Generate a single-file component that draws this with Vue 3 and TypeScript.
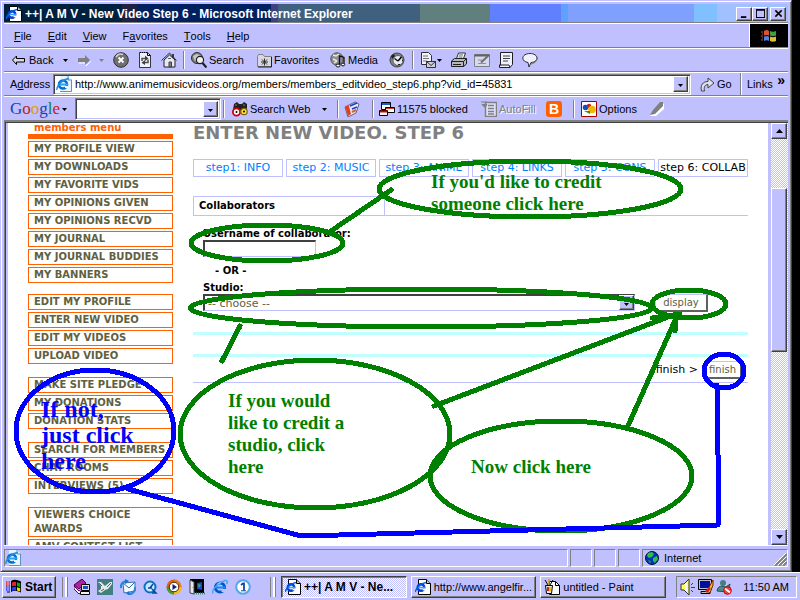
<script setup lang="ts">
import { ref } from 'vue'

interface Tool { id: string; icon: string; label?: string; caret?: boolean }

const url = ref('http://www.animemusicvideos.org/members/members_editvideo_step6.php?vid_id=45831')
const query = ref('')
const username = ref('')
const studio = ref('')

const menus: [string, string, string][] = [
  ['', 'F', 'ile'], ['', 'E', 'dit'], ['', 'V', 'iew'], ['F', 'a', 'vorites'], ['', 'T', 'ools'], ['', 'H', 'elp'],
]

const tools: Tool[] = [
  { id: 'back', icon: 'back', label: 'Back' },
  { id: 'back-list', icon: 'caret' },
  { id: 'forward', icon: 'forward' },
  { id: 'forward-list', icon: 'caret-off' },
  { id: 'stop', icon: 'stop' },
  { id: 'refresh', icon: 'refresh' },
  { id: 'home', icon: 'home' },
  { id: 'sep', icon: '' },
  { id: 'search', icon: 'search', label: 'Search' },
  { id: 'favorites', icon: 'favorites', label: 'Favorites' },
  { id: 'media', icon: 'media', label: 'Media' },
  { id: 'history', icon: 'history' },
  { id: 'sep', icon: '' },
  { id: 'mail', icon: 'mail' },
  { id: 'mail-list', icon: 'caret' },
  { id: 'print', icon: 'print' },
  { id: 'edit', icon: 'edit' },
  { id: 'discuss', icon: 'note' },
  { id: 'messenger', icon: 'balloon' },
]

const sideGroups: string[][] = [
  ['MY PROFILE VIEW', 'MY DOWNLOADS', 'MY FAVORITE VIDS', 'MY OPINIONS GIVEN', 'MY OPINIONS RECVD', 'MY JOURNAL', 'MY JOURNAL BUDDIES', 'MY BANNERS'],
  ['EDIT MY PROFILE', 'ENTER NEW VIDEO', 'EDIT MY VIDEOS', 'UPLOAD VIDEO'],
  ['MAKE SITE PLEDGE', 'MY DONATIONS', 'DONATION STATS'],
  ['SEARCH FOR MEMBERS', 'CHAT ROOMS', 'INTERVIEWS (5)'],
  ['VIEWERS CHOICE AWARDS', 'AMV CONTEST LIST'],
]

const steps = ['step1: INFO', 'step 2: MUSIC', 'step 3: ANIME', 'step 4: LINKS', 'step 5: CONS', 'step 6: COLLAB']

const launchers = ['books', 'bird', 'outlook', 'quicktime', 'player', 'door', 'ie', 'one']

const tasks = [
  { icon: 'iepage', label: '++| A M V - Ne...', active: true },
  { icon: 'iepage', label: 'http://www.angelfir...', active: false },
  { icon: 'paint', label: 'untitled - Paint', active: false },
]
</script>

<template>
  <div class="screen">
    <svg class="sprites" aria-hidden="true">
      <symbol id="i-ie" viewBox="0 0 16 16">
        <circle cx="8" cy="8.500" r="4.600" fill="none" stroke="#0058c8" stroke-width="3" />
        <path d="M4 8.500H13.500" stroke="#2088f0" stroke-width="2.200" />
        <path d="M9.500 10h6v3h-6z" fill="#c0c0ff" />
        <path d="M1 14.500C-1 11 7 3 13 1.500c3-.5 2.500 2 1.500 3.500" fill="none" stroke="#40a8f8" stroke-width="1.500" />
        <path d="M5 5.500a4.500 4.500 0 0 1 4-1.700" fill="none" stroke="#90d8ff" stroke-width="1.200" />
      </symbol>
      <symbol id="i-iepage" viewBox="0 0 16 16">
        <path d="M3.500 .5h8l4 4v11h-12z" fill="#fff" stroke="#000" />
        <path d="M11.500 .5v4h4" fill="#c0c0c0" stroke="#000" />
        <circle cx="6" cy="8.500" r="3.300" fill="none" stroke="#0040d0" stroke-width="2.400" />
        <path d="M3 8.500h7" stroke="#40a0ff" stroke-width="1.500" />
        <path d="M.5 13C0 10 6 4 11 3.500" fill="none" stroke="#0060e0" stroke-width="1.300" />
        <path d="M7.500 9.500h4v1.800h-4z" fill="#fff" />
      </symbol>
      <symbol id="i-iedoc" viewBox="0 0 16 16">
        <path d="M4 0h8l4 4v12H4z" fill="#e8f4ff" />
        <path d="M12 0v4h4M15.500 4v11.500H4" fill="none" stroke="#6090c0" />
        <circle cx="7" cy="8.500" r="4" fill="none" stroke="#0070d0" stroke-width="2.600" />
        <path d="M3 8.500h9" stroke="#30a0f0" stroke-width="2" />
        <path d="M9 10h5v2H9z" fill="#e8f4ff" />
        <path d="M1 14C0 10 7 3 13 2.500" fill="none" stroke="#2090e0" stroke-width="1.400" />
      </symbol>
      <symbol id="i-caret" viewBox="0 0 5 16"><path d="M0 7h5L2.500 10z" fill="#000" /></symbol>
      <symbol id="i-caret-off" viewBox="0 0 5 16"><path d="M0 7h5L2.500 10z" fill="#808080" /></symbol>
      <symbol id="i-back" viewBox="0 0 16 16">
        <path d="M1.500 8l4-4v2.500h8v3.500h-8v2.500z" fill="#d8d8e8" stroke="#000" stroke-linejoin="round" />
      </symbol>
      <symbol id="i-forward" viewBox="0 0 16 16">
        <path d="M14 9l-5 5v-3H2" fill="none" stroke="#fff" />
        <path d="M1 6h7V3l5 5-5 5v-3H1z" fill="#808080" />
      </symbol>
      <symbol id="i-stop" viewBox="0 0 16 16">
        <circle cx="8" cy="8" r="7.300" fill="#707070" stroke="#303030" />
        <path d="M3 5a6 6 0 0 1 7-2.500" fill="none" stroke="#d0d0d0" stroke-width="1.500" />
        <path d="M5.500 5.500l5 5m0-5l-5 5" stroke="#fff" stroke-width="1.800" />
      </symbol>
      <symbol id="i-refresh" viewBox="0 0 16 16">
        <path d="M2.500 .5h8l3 3v12h-11z" fill="#f0f0ff" stroke="#000" stroke-dasharray="1.500 .5" />
        <path d="M10.500 .5v3h3" fill="none" stroke="#000" />
        <path d="M5 9V6.500h4M11 7.500V10.500H7" fill="none" stroke="#505050" stroke-width="1.500" />
        <path d="M8 3.500l3.500 3L8 9zM8 8l-3.500 2.700L8 13z" fill="#404040" />
      </symbol>
      <symbol id="i-home" viewBox="0 0 16 16">
        <path d="M11 2h2v4h-2z" fill="#404040" />
        <path d="M3 8v7h11V8L8.500 3z" fill="#e8e8f8" stroke="#202020" />
        <path d="M.5 8.500L8.500 1l7 7.500" fill="none" stroke="#303030" />
        <path d="M8 10h2.500v5H8z" fill="#808080" stroke="#404040" />
        <path d="M7 6.500h3" stroke="#606060" />
      </symbol>
      <symbol id="i-search" viewBox="0 0 16 16">
        <circle cx="6" cy="6" r="5.500" fill="#808080" stroke="#303030" />
        <path d="M2 4l4-2 4 2-2 3-4 2z" fill="#c8c8c8" />
        <circle cx="9" cy="8" r="3.600" fill="#f0f0f0" stroke="#202020" stroke-width="1.200" />
        <path d="M11.500 11l4 4.500" stroke="#202020" stroke-width="2.200" />
      </symbol>
      <symbol id="i-favorites" viewBox="0 0 16 16">
        <path d="M1.500 4.500v10h14v-10h-7l-1.500-2H2.500z" fill="#d8d8e0" stroke="#808080" />
        <path d="M15.500 5v10H2" fill="none" stroke="#202020" />
        <path d="M5 10h7M8.500 6.500v7M6 7.500l5 5m0-5l-5 5" stroke="#303030" />
      </symbol>
      <symbol id="i-media" viewBox="0 0 16 16">
        <circle cx="7" cy="7" r="6.200" fill="#909090" stroke="#505050" />
        <path d="M3 3l3 1 3-2M3 7l4 2M4 11l3-2" stroke="#e8e8e8" stroke-width="1.500" fill="none" />
        <path d="M9.500 13V4l4.500 1.500V12" fill="none" stroke="#101010" stroke-width="1.300" />
        <ellipse cx="8" cy="13.500" rx="2" ry="1.500" fill="#fff" stroke="#101010" />
        <ellipse cx="13" cy="12.500" rx="1.700" ry="1.400" fill="#fff" stroke="#101010" />
      </symbol>
      <symbol id="i-history" viewBox="0 0 16 16">
        <circle cx="8" cy="8" r="7" fill="#808088" stroke="#404040" />
        <circle cx="9" cy="8.500" r="5" fill="#e8e8f0" stroke="#606060" />
        <path d="M9 9l3.500-4" stroke="#000" stroke-width="1.500" />
        <path d="M9 9L5.500 6.500" stroke="#000" stroke-width="1.200" />
        <path d="M2 4l3-2 1 2-3 3zM9 12h2v1H9zM13 8h1v1h-1z" fill="#202020" />
      </symbol>
      <symbol id="i-mail" viewBox="0 0 16 16">
        <path d="M1.500 .5h7l3 3v9h-10z" fill="#f0f0ff" stroke="#303030" />
        <path d="M3 4h5M3 6.500h6M3 9h4" stroke="#707070" />
        <path d="M6.500 9.500h9v6h-9z" fill="#d0d0d8" stroke="#303030" />
        <path d="M6.500 9.500l4.500 4 4.500-4" fill="none" stroke="#303030" />
      </symbol>
      <symbol id="i-print" viewBox="0 0 16 16">
        <path d="M5.500 6.500l2-5.500h7l-2 5.500z" fill="#fff" stroke="#303030" />
        <path d="M8 3h4M7.500 5h4" stroke="#606060" />
        <path d="M.5 9l3-2.500h12v5.500l-3 2.500H.5z" fill="#b8b8c0" stroke="#202020" />
        <path d="M.5 9.500h12l3-3M12.500 9.500v5M2 12.500h8" fill="none" stroke="#202020" />
      </symbol>
      <symbol id="i-edit" viewBox="0 0 16 16">
        <path d="M.5 2.500h15v12H.5z" fill="#d8d8f0" stroke="#808080" />
        <path d="M.5 3.500h15" stroke="#606060" stroke-width="2" />
        <path d="M4 8h4M4 11.500h8" stroke="#909090" />
        <path d="M14 4L7 10.500" stroke="#707070" stroke-width="2" />
      </symbol>
      <symbol id="i-note" viewBox="0 0 16 16">
        <path d="M2.500 .5h12v12l-2.500 3H1.500V13h1z" fill="#f0f0ff" stroke="#202020" />
        <path d="M5 4h7M5 6.500h7M5 9h5" stroke="#404040" />
        <path d="M1.500 13H11l1 2.500" fill="none" stroke="#202020" />
      </symbol>
      <symbol id="i-balloon" viewBox="0 0 16 16">
        <path d="M8 1.500c4 0 7 2 7 4.500s-3 4.500-6 4.500L7 15l-1-4.500C3 10 .8 8.500 .8 6 .8 3.500 4 1.500 8 1.500z" fill="#f0f0ff" stroke="#303030" />
        <path d="M9 12c4-1 6.500-3 6-7" fill="none" stroke="#707070" />
      </symbol>
      <symbol id="i-go" viewBox="0 0 16 16">
        <path d="M2.500 15C1 9 4 5.500 9 5.500V2l6 5-6 5V8.500c-3 0-4.500 2.500-3.500 6.500z" fill="#e0e0f0" stroke="#404040" />
      </symbol>
      <symbol id="i-binoculars" viewBox="0 0 16 16">
        <path d="M2 3l3-2 2 2h3l2-2 3 2v6H1z" fill="#202020" />
        <path d="M3 4h2M11 4h2" stroke="#808080" />
        <circle cx="4.500" cy="11" r="3.600" fill="#fff" stroke="#d00000" stroke-width="1.800" />
        <circle cx="12" cy="10.500" r="3.200" fill="#ffe040" stroke="#806000" stroke-width="1.200" />
        <circle cx="4.500" cy="11" r="1" fill="#000" /><circle cx="12" cy="10.500" r="1" fill="#000" />
      </symbol>
      <symbol id="i-news" viewBox="0 0 16 16">
        <path d="M1 6l10-5 4 2-3 9-8 4z" fill="#e8e8f8" stroke="#606080" />
        <path d="M1 5h4l2 8-3 2z" fill="#e04020" />
        <path d="M6 5l7-3M8 8l5-2" stroke="#2040c0" stroke-width="1.500" />
        <path d="M8 11l4-2" stroke="#e06020" stroke-width="2" />
      </symbol>
      <symbol id="i-popup" viewBox="0 0 16 16">
        <path d="M2.500 1.500h9v7h-9z" fill="#fff" stroke="#000" /><path d="M3 3h8" stroke="#1060d0" stroke-width="2" />
        <path d="M6.500 6.500h9v5h-9z" fill="#fff" stroke="#000" /><path d="M7 7.500h8" stroke="#d04020" />
        <path d="M.5 9.500h8v5h-8z" fill="#fff" stroke="#000" /><path d="M1 10.500h7" stroke="#d00000" stroke-width="2" />
      </symbol>
      <symbol id="i-autofill" viewBox="0 0 16 16">
        <path d="M4.500 1.500h11v14h-11z" fill="#e0e0ff" stroke="#808080" stroke-width="1.500" />
        <path d="M7 4.500h6M7 7.500h6M7 10.500h6M7 13h6" stroke="#808080" stroke-width="1.500" />
        <path d="M0 1h6M1 3.500h5l-2 3z" fill="#808080" stroke="#808080" />
      </symbol>
      <symbol id="i-options" viewBox="0 0 16 16">
        <path d="M.5 .5h15v15H.5z" fill="#fff" stroke="#a00000" />
        <circle cx="4.500" cy="6.500" r="2.800" fill="#1050c0" /><circle cx="8" cy="5" r="2.200" fill="#d02020" />
        <circle cx="11" cy="8.500" r="3.800" fill="#f0b800" /><path d="M3 10h6v3z" fill="#309030" />
      </symbol>
      <symbol id="i-pen" viewBox="0 0 16 16">
        <path d="M1 15l3-5 8-8 3 1v5l-8 7z" fill="#fff" />
        <path d="M1 14l3-5 7-8h3v4l-8 8z" fill="#808080" />
      </symbol>
      <symbol id="i-winflag" viewBox="0 0 16 16">
        <path d="M3 3q3-2 5 0v4.500q-2-1-5 0z" fill="#e05030" /><path d="M9 3q3 1.500 6 0v4.500q-3 1.500-6 0z" fill="#40a040" />
        <path d="M3 8.500q3-1 5 0V13q-2-1.500-5 0z" fill="#5080e0" /><path d="M9 8.500q3 1.500 6 0V13q-3 1.500-6 0z" fill="#e0c030" />
        <path d="M0 4h2M1 6h1M0 8h2M1 10h1M0 12h2" stroke="#a05050" />
      </symbol>
      <symbol id="i-start" viewBox="0 0 16 16">
        <path d="M5 2q4-2.500 10 .5v11q-6-3-10-.5z" fill="#000" />
        <path d="M6 3.500q2-1.200 4-.5v4q-2-.7-4 .3z" fill="#f02020" /><path d="M11 3.200q2 .4 3.200 1v4q-1.500-.9-3.200-1z" fill="#00b000" />
        <path d="M6 8.500q2-1.200 4-.5v3.500q-2-.5-4 .2z" fill="#2040ff" /><path d="M11 8.300q2 .3 3.200 1v3.300q-1.500-.7-3.200-1z" fill="#f0e000" />
        <path d="M0 3h1.500M2.500 3H4M0 5h1.500M2.500 5H4" stroke="#f02020" stroke-width="1.500" />
        <path d="M0 9h1.500M2.500 9H4M0 11h1.500M2.500 11H4" stroke="#2040ff" stroke-width="1.500" />
        <path d="M0 7h1.500M2.500 7H4M1 13h3" stroke="#000" />
      </symbol>
      <symbol id="i-globe" viewBox="0 0 16 16">
        <circle cx="8" cy="8" r="6.500" fill="#0030c0" stroke="#001040" />
        <path d="M4 3l4-1 2 2-2 3-3 1-2-2zM9 8l4-2 1 3-3 4-2-2z" fill="#30c040" /><path d="M4 10l3 1-1 3z" fill="#20a030" />
      </symbol>
      <symbol id="i-books" viewBox="0 0 16 16">
        <path d="M0 6l8-6 4 4-7 6z" fill="#b020a0" stroke="#400040" /><path d="M0 7l5 5 6-4v2l-6 5-5-5z" fill="#fff" stroke="#600060" />
        <path d="M7.500 5.500h8v6h-8z" fill="#e0e0e0" stroke="#000" /><path d="M9 7h5v3H9z" fill="#2050c0" />
        <path d="M6.500 12.500h9v3h-9z" fill="#f0f0f0" stroke="#000" />
      </symbol>
      <symbol id="i-bird" viewBox="0 0 16 16">
        <path d="M0 0h16v16H0z" fill="#408080" />
        <path d="M1 3h3l4 4 5-4h2v2l-4 5-3 1-4 3-3-2 3-2v-3z" fill="#e8e8e8" /><path d="M2 4l3 3M10 8l4-4M4 12l3-2" stroke="#606060" />
      </symbol>
      <symbol id="i-outlook" viewBox="0 0 16 16">
        <path d="M3 4l12-1v9L4 14z" fill="#f4faff" stroke="#3070b0" /><path d="M3 4l6 5 6-6" fill="none" stroke="#3070b0" />
        <path d="M1 9a6 6 0 0 1 5-7M15 8a6 6 0 0 1-7 7" fill="none" stroke="#2888e0" stroke-width="2.200" />
        <path d="M5 0l4 2-4 3zM9 12l-3 3 4 1z" fill="#2070d0" />
      </symbol>
      <symbol id="i-quicktime" viewBox="0 0 16 16">
        <circle cx="7" cy="8" r="5.500" fill="#c8e8ff" stroke="#0870c8" stroke-width="2" />
        <path d="M7 9l3-4M5 9h4M9 10l4 4h-4" stroke="#084890" stroke-width="1.500" fill="none" />
      </symbol>
      <symbol id="i-player" viewBox="0 0 16 16">
        <circle cx="8" cy="8" r="7.500" fill="#e06010" /><path d="M8 .5a7.500 7.500 0 0 1 7.500 7.500H8z" fill="#e08020" />
        <path d="M15.500 8A7.500 7.500 0 0 1 8 15.500V8z" fill="#f0c020" /><path d="M.5 8A7.500 7.500 0 0 0 8 15.500V8z" fill="#40a030" />
        <circle cx="8" cy="8" r="4.800" fill="#fff" stroke="#502000" /><path d="M6.500 5v6l4.500-3z" fill="#102080" />
      </symbol>
      <symbol id="i-door" viewBox="0 0 16 16">
        <path d="M1 0h14v14H1z" fill="#000" /><path d="M1 1l4 2v12l-4-1z" fill="#e8e8e8" stroke="#404040" />
        <path d="M8 4l5-1v8l-5-1z" fill="#2040d0" /><path d="M9 5l3 1-2 3z" fill="#30c040" />
        <path d="M5 14.500h11" stroke="#408080" stroke-width="2" stroke-dasharray="1 1" /><path d="M3.500 8h1v1h-1z" fill="#c08000" />
      </symbol>
      <symbol id="i-one" viewBox="0 0 16 16">
        <circle cx="8" cy="8" r="6.800" fill="#fff" stroke="#50a8e8" stroke-width="2" />
        <path d="M6 6l2-1.500h1v7" fill="none" stroke="#1048a0" stroke-width="1.800" /><path d="M6 11.800h5" stroke="#1048a0" />
      </symbol>
      <symbol id="i-paint" viewBox="0 0 16 16">
        <path d="M5.500 2.500h6l4 4v9h-10z" fill="#fff" stroke="#000" /><path d="M11.500 2.500v4h4" fill="none" stroke="#000" />
        <path d="M1.500 6.500h7l-1 8h-5z" fill="#e8e8e8" stroke="#000" /><path d="M1 1l3 5M9 1L6 6" stroke="#000" />
        <path d="M5 0v6" stroke="#d0a000" stroke-width="1.500" />
        <path d="M3 8h2v4H3z" fill="#d02020" /><path d="M5 8h2v4H5z" fill="#e0c000" />
      </symbol>
      <symbol id="i-speaker" viewBox="0 0 16 16">
        <path d="M1 5h3l5-5v16l-5-5H1z" fill="#ffff60" stroke="#303030" /><path d="M6 4v8" stroke="#fff" stroke-width="2" />
        <path d="M11 6l2-2M11 8.500h4M11 11l2 2" stroke="#404040" />
      </symbol>
      <symbol id="i-display" viewBox="0 0 16 16">
        <path d="M.5 .5h13v10H.5z" fill="#c0c0c0" stroke="#000" /><path d="M2 2h10v7H2z" fill="#0010a0" />
        <path d="M3 12.500h9v2H3z" fill="#c0c0c0" stroke="#000" /><path d="M15 1L9 12l3 2 3-8z" fill="#f0c020" stroke="#802000" />
        <path d="M8 13l4-4" stroke="#d02020" stroke-width="2.500" />
      </symbol>
      <symbol id="i-contact" viewBox="0 0 16 16">
        <circle cx="7" cy="4" r="3" fill="#408080" /><path d="M1 12c1-6 5-5 9-4l4-3-2 8z" fill="#508888" stroke="#205050" />
        <circle cx="11.500" cy="11.500" r="3.800" fill="#f04040" stroke="#c00000" /><path d="M9 9.500l5 4" stroke="#fff" stroke-width="1.800" />
      </symbol>
    </svg>

    <div class="desktop">
      <div class="window">
        <header class="title-bar">
          <svg class="icon"><use href="#i-iepage" /></svg>
          <span class="title-text">++| A M V - New Video Step 6 - Microsoft Internet Explorer</span>
          <button class="caption" aria-label="Minimize"><svg viewBox="0 0 10 10"><path d="M1 8h6v2H1z" /></svg></button>
          <button class="caption" aria-label="Maximize"><svg viewBox="0 0 10 10"><path d="M0 0h10v10H0zM1 2v7h8V2z" fill-rule="evenodd" /></svg></button>
          <button class="caption close" aria-label="Close"><svg viewBox="0 0 10 10"><path d="M1.500 1.500l7 7m0-7l-7 7" stroke="#000" stroke-width="1.700" /></svg></button>
        </header>

        <nav class="band menu-band">
          <div class="menu-list">
            <button v-for="m in menus" :key="m[1]" class="flat">{{ m[0] }}<u>{{ m[1] }}</u>{{ m[2] }}</button>
          </div>
          <span class="throbber"><svg class="icon"><use href="#i-winflag" /></svg></span>
        </nav>

        <div class="band tool-band">
          <template v-for="(t, i) in tools" :key="i">
            <span v-if="t.id === 'sep'" class="rule"></span>
            <button v-else class="flat tool" :aria-label="t.id">
              <svg :class="t.icon.startsWith('caret') ? 'caret' : 'icon'"><use :href="'#i-' + t.icon" /></svg>
              <span v-if="t.label">{{ t.label }}</span>
            </button>
          </template>
        </div>

        <div class="band address-band">
          <label for="address">A<u>d</u>dress</label>
          <div class="combo address-combo">
            <svg class="icon"><use href="#i-iedoc" /></svg>
            <input id="address" v-model="url" type="text" spellcheck="false" />
            <button class="drop" aria-label="Show addresses"><svg class="caret"><use href="#i-caret" /></svg></button>
          </div>
          <button class="flat tool go"><svg class="icon"><use href="#i-go" /></svg><span>Go</span></button>
          <div class="links"><span>Links</span><b>»</b></div>
        </div>

        <div class="band google-band">
          <button class="flat tool logo" aria-label="Google">
            <span class="wordmark"><i class="b">G</i><i class="r">o</i><i class="y">o</i><i class="b">g</i><i class="g">l</i><i class="r">e</i></span>
            <svg class="caret"><use href="#i-caret" /></svg>
          </button>
          <div class="combo">
            <input v-model="query" type="text" aria-label="Search terms" />
            <button class="drop" aria-label="Show searches"><svg class="caret"><use href="#i-caret" /></svg></button>
          </div>
          <span class="rule"></span>
          <button class="flat tool"><svg class="icon"><use href="#i-binoculars" /></svg><span>Search Web</span></button>
          <button class="flat tool" aria-label="Search options"><svg class="caret"><use href="#i-caret" /></svg></button>
          <span class="rule"></span>
          <button class="flat tool" aria-label="News"><svg class="icon"><use href="#i-news" /></svg></button>
          <span class="rule"></span>
          <button class="flat tool"><svg class="icon"><use href="#i-popup" /></svg><span>11575 blocked</span></button>
          <button class="flat tool off"><svg class="icon"><use href="#i-autofill" /></svg><span>AutoFill</span></button>
          <button class="flat tool" aria-label="BlogThis"><span class="blog">B</span></button>
          <span class="rule"></span>
          <button class="flat tool"><svg class="icon"><use href="#i-options" /></svg><span>Options</span></button>
          <button class="flat tool" aria-label="Highlight"><svg class="icon"><use href="#i-pen" /></svg></button>
        </div>

        <div class="viewport">
          <div class="page">
            <aside class="sidebar">
              <h2>members menu</h2>
              <ul v-for="(g, i) in sideGroups" :key="i" :class="{ first: i === 0 }">
                <li v-for="item in g" :key="item"><a href="#">{{ item }}</a></li>
              </ul>
            </aside>
            <main>
              <h1>ENTER NEW VIDEO. STEP 6</h1>
              <nav class="steps">
                <a v-for="(s, i) in steps" :key="s" href="#" :class="{ current: i === 5 }">{{ s }}</a>
              </nav>
              <div class="section-head"><h3>Collaborators</h3><span></span></div>
              <form class="form" @submit.prevent>
                <label for="username">Username of collaborator:</label>
                <input id="username" v-model="username" class="field" type="text" />
                <p class="or">- OR -</p>
                <label for="studio">Studio:</label>
                <div class="studio-row">
                  <div class="select-wrap">
                    <select id="studio" v-model="studio"><option value="">-- choose --</option></select>
                    <span class="drop"><svg class="caret"><use href="#i-caret" /></svg></span>
                  </div>
                  <button class="push display">display</button>
                </div>
              </form>
              <div class="cyan first"></div>
              <div class="cyan"></div>
              <div class="finish-row"><span>finish &gt;</span><button class="push">finish</button></div>
            </main>
          </div>
          <div class="scrollbar">
            <button class="arrow" aria-label="Scroll up"><svg viewBox="0 0 7 4"><path d="M0 4h7L3.500 0z" /></svg></button>
            <span class="before"></span><span class="thumb"></span><span class="after"></span>
            <button class="arrow" aria-label="Scroll down"><svg viewBox="0 0 7 4"><path d="M0 0h7L3.500 4z" /></svg></button>
          </div>
        </div>

        <footer class="status">
          <span class="pane"><svg class="icon"><use href="#i-iedoc" /></svg></span>
          <span class="pane"></span><span class="pane"></span><span class="pane"></span>
          <span class="pane zone">
            <svg class="icon"><use href="#i-globe" /></svg>Internet
            <svg class="grip" viewBox="0 0 14 14"><path d="M2 14L14 2M6 14l8-8M10 14l4-4" stroke="#808080" stroke-width="2" /><path d="M1 13L13 1M5 13l8-8M9 13l4-4" stroke="#fff" /></svg>
          </span>
        </footer>
      </div>
    </div>

    <div class="taskbar">
      <button class="start"><svg class="icon"><use href="#i-start" /></svg>Start</button>
      <span class="handle"></span>
      <div class="launch">
        <button v-for="l in launchers" :key="l" class="flat" :aria-label="l"><svg class="icon"><use :href="'#i-' + l" /></svg></button>
      </div>
      <span class="handle"></span>
      <div class="tasks">
        <button v-for="t in tasks" :key="t.label" class="task" :class="{ active: t.active }">
          <svg class="icon"><use :href="'#i-' + t.icon" /></svg><span>{{ t.label }}</span>
        </button>
      </div>
      <div class="tray">
        <svg class="icon"><use href="#i-speaker" /></svg>
        <svg class="icon"><use href="#i-display" /></svg>
        <svg class="icon"><use href="#i-contact" /></svg>
        <time>11:50 AM</time>
      </div>
    </div>

    <svg class="notes" width="800" height="600" viewBox="0 0 800 600">
      <g class="ink green">
        <ellipse cx="530" cy="189" rx="151" ry="28" />
        <ellipse cx="267" cy="243" rx="76" ry="18" />
        <ellipse cx="421" cy="308" rx="231" ry="19" />
        <ellipse cx="689" cy="304" rx="37" ry="14" />
        <ellipse cx="315" cy="434" rx="135" ry="74" />
        <ellipse cx="561" cy="476" rx="131" ry="55" />
        <path d="M391 190L328 233M240 326L222 361M434 406L668 317M652 318L680 314M627 428L677 316M675 314V331" />
      </g>
      <g class="ink blue">
        <ellipse cx="95" cy="431" rx="79" ry="61" />
        <ellipse cx="724" cy="371" rx="20" ry="17" />
        <path d="M128 489L301 536L718 525V455L717 385" />
      </g>
      <g class="words green">
        <text x="431" y="188">If you'd like to credit</text>
        <text x="431" y="210">someone click here</text>
        <text x="228" y="407">If you would</text>
        <text x="228" y="429">like to credit a</text>
        <text x="228" y="451">studio, click</text>
        <text x="228" y="473">here</text>
        <text x="471" y="473">Now click here</text>
      </g>
      <g class="words blue">
        <text x="41" y="417">If not,</text>
        <text x="41" y="443">just click</text>
        <text x="41" y="469">here</text>
      </g>
    </svg>
  </div>
</template>

<style>
body { background: #000; overflow: hidden; }
</style>

<style scoped>
* { box-sizing: border-box; }
.screen { position: relative; height: 100vh; display: flex; flex-direction: column; font: 11px/14px "Liberation Sans", Arial, sans-serif; color: #000; background: #000; overflow: hidden; }
.sprites { position: absolute; width: 0; height: 0; }
button, input, select { font: inherit; color: inherit; padding: 0; margin: 0; border: 0; border-radius: 0; background: none; }
h1, h2, h3, p, ul { margin: 0; padding: 0; }
a { color: inherit; text-decoration: none; }
.icon { width: 16px; height: 16px; flex: none; display: block; }
.caret { width: 5px; height: 16px; flex: none; display: block; }

.desktop { flex: 1; min-height: 0; display: flex; padding-right: 8px; }
.window { flex: 1; min-width: 0; display: flex; flex-direction: column; padding: 3px; background: #c0c0ff; border: 1px solid #c0c0ff; border-right-color: #404040; border-bottom-color: #404040; box-shadow: inset 1px 1px #fff, inset -1px -1px #808080; }

.title-bar { height: 19px; flex: none; display: flex; align-items: center; padding: 0 2px; color: #fff; font-weight: bold; font-size: 12px;
  background: linear-gradient(90deg, #002040 15%, #202040 15% 17%, #002060 17% 34%, #404080 34% 35%, #406080 35% 53%, #608080 53% 62%, #6080ff 62% 71%, #60a0ff 71% 72%, #80a0ff 72% 88%, #80c0ff 88% 91%, #a0c0ff 91%); }
.title-text { flex: 1; padding-left: 3px; white-space: nowrap; }
.caption { width: 16px; height: 14px; display: grid; place-items: center; background: #c0c0ff; border: 1px solid #fff; border-right-color: #404040; border-bottom-color: #404040; box-shadow: inset -1px -1px #808080; }
.caption svg { width: 9px; height: 9px; }
.caption.close { margin-left: 2px; }

.band { height: 24px; flex: none; display: flex; align-items: center; border-top: 1px solid #fff; border-bottom: 1px solid #808080; }
.menu-band { height: 25px; box-shadow: 0 -1px #808080; }
.menu-list { flex: 1; display: flex; gap: 16px; padding-left: 10px; }
.throbber { width: 39px; align-self: stretch; display: grid; place-items: center; background: #000; border-left: 1px solid #fff; }
.flat { display: flex; align-items: center; white-space: pre; }
.tool { gap: 2px; }
.rule { width: 2px; height: 18px; border-left: 1px solid #808080; border-right: 1px solid #fff; }
.tool-band { display: grid; grid-template-columns: 52px 14px 22px 14px 24px 24px 22px 8px 65px 74px 59px 23px 8px 17px 14px 23px 24px 24px 1fr; padding-left: 7px; }

.address-band { padding-left: 6px; }
.address-band label { width: 43px; }
.combo { height: 21px; flex: none; display: flex; align-items: center; background: #fff; border: 1px solid #808080; border-right-color: #fff; border-bottom-color: #fff; box-shadow: inset 1px 1px #404040, inset -1px -1px #c0c0ff; padding: 2px; }
.combo input { flex: 1; min-width: 0; padding-left: 3px; outline: 0; }
.address-combo { flex: 1; }
.drop { width: 15px; height: 16px; flex: none; display: grid; place-items: center; background: #c0c0ff; border: 1px solid #fff; border-right-color: #404040; border-bottom-color: #404040; box-shadow: inset -1px -1px #808080; }
.go { width: 50px; height: 22px; padding-left: 8px; border-right: 1px solid #808080; }
.links { width: 47px; align-self: stretch; display: flex; align-items: center; justify-content: space-between; padding: 0 3px 0 5px; border-left: 1px solid #fff; }
.links b { font-size: 14px; align-self: flex-start; }

.google-band { height: 25px; display: grid; grid-template-columns: 65px 146px 11px 90px 13px 9px 26px 9px 102px 65px 25px 10px 68px 1fr; padding-left: 6px; }
.google-band .combo { height: 22px; }
.google-band > .rule { margin-left: 2px; }
.wordmark { font: 17px/20px "Liberation Serif", serif; width: 50px; text-align: left; }
.wordmark i { font-style: normal; }
.wordmark .b { color: #2040b0; }
.wordmark .r { color: #c02020; }
.wordmark .y { color: #d8a000; }
.wordmark .g { color: #108030; }
.off { color: #808080; text-shadow: 1px 1px #fff; }
.blog { width: 16px; height: 16px; border-radius: 3px; background: #ff6000; color: #fff; font: bold 14px/16px "Liberation Sans", sans-serif; text-align: center; }

.viewport { flex: 1; min-height: 0; display: flex; background: #fff; border: 1px solid #808080; border-width: 1px 0 0 1px; box-shadow: inset 1px 1px #404040; padding: 1px 0 0 1px; }
.page { flex: 1; min-width: 0; display: flex; gap: 20px; overflow: hidden; padding: 0 20px; border-left: 2px solid #c0c0ff; font-family: "DejaVu Sans", Verdana, sans-serif; font-size: 10px; }
.sidebar { width: 145px; flex: none; margin-top: -1px; font-weight: bold; color: #606040; }
.sidebar h2 { font-size: 10px; line-height: 12px; padding-left: 6px; color: #ff6000; border-bottom: 5px solid #ff6000; margin-bottom: 2px; }
.sidebar ul { list-style: none; display: flex; flex-direction: column; gap: 2px; margin-bottom: 13px; }
.sidebar ul.first { margin-bottom: 11px; }
.sidebar a { display: block; border: 1px solid #ff6000; padding: 0 5px; line-height: 14px; }
main { flex: 1; min-width: 0; margin-top: -1px; }
h1 { font-size: 18px; line-height: 22px; color: #808080; margin-bottom: 15px; white-space: nowrap; }
.steps { display: grid; grid-template-columns: repeat(6, 1fr); gap: 3px; font-size: 11px; line-height: 16px; color: #0080ff; text-align: center; }
.steps a { border: 1px solid #c0c0ff; white-space: nowrap; }
.steps .current { color: #000; }
.section-head { display: grid; grid-template-columns: 192px 1fr; margin-top: 19px; height: 20px; }
.section-head h3 { font-size: 10px; line-height: 18px; padding-left: 5px; border: 1px solid #c0c0ff; }
.section-head span { border-bottom: 1px solid #c0c0ff; }
.form { padding: 11px 0 0 10px; font-weight: bold; line-height: 13px; }
.form label { display: block; }
.field { display: block; width: 113px; height: 17px; background: #fff; border: 1px solid #c0c0ff; border-top: 2px solid #404040; border-left: 2px solid #404040; outline: 0; }
.or { padding: 7px 0 4px 12px; }
.studio-row { display: flex; gap: 20px; font-weight: normal; color: #606040; }
.select-wrap { position: relative; width: 432px; height: 17px; }
.select-wrap select { appearance: none; width: 100%; height: 17px; padding-left: 3px; font-size: 11px; background: #fff; border: 1px solid #c0c0ff; border-top: 2px solid #404040; border-left: 2px solid #404040; outline: 0; }
.select-wrap .drop { position: absolute; right: 1px; top: 1px; height: 15px; pointer-events: none; }
.push { height: 18px; padding: 0 4px; background: #fff; color: #606040; border: 1px solid #c0c0ff; border-right: 2px solid #606060; border-bottom: 2px solid #606060; font-size: 10px; line-height: 14px; }
.display { width: 53px; }
.cyan { height: 3px; background: #c0ffff; margin-top: 19px; }
.cyan.first { margin-top: 20px; }
.finish-row { display: flex; justify-content: flex-end; align-items: center; gap: 6px; padding: 4px 6px 3px 0; border-bottom: 1px solid #c0c0ff; font-size: 11px; }

.scrollbar { width: 20px; flex: none; display: flex; flex-direction: column; border-left: 3px solid #c0c0ff; padding-right: 1px; background: repeating-conic-gradient(#c0c0ff 0 25%, #fff 0 50%) 0 0 / 2px 2px; }
.arrow, .thumb { background: #c0c0ff; border: 1px solid #fff; border-right-color: #404040; border-bottom-color: #404040; box-shadow: inset -1px -1px #808080; }
.arrow { height: 16px; flex: none; display: grid; place-items: center; }
.arrow svg { width: 7px; height: 4px; }
.before { flex: 49; }
.thumb { flex: 164; }
.after { flex: 178; }

.status { flex: none; display: grid; grid-template-columns: 1fr 22px 22px 22px 146px; gap: 2px; border-top: 1px solid #fff; padding: 3px 0 1px; }
.pane { height: 18px; display: flex; align-items: center; border: 1px solid #808080; border-right-color: #fff; border-bottom-color: #fff; }
.zone { gap: 4px; padding-left: 1px; }
.grip { width: 14px; height: 14px; margin-left: auto; align-self: flex-end; }

.taskbar { height: 28px; flex: none; display: flex; align-items: center; gap: 6px; padding: 2px 3px 1px 2px; background: #c0c0ff; border-top: 1px solid #fff; }
.start, .task { height: 22px; display: flex; align-items: center; gap: 3px; padding: 0 3px; background: #c0c0ff; border: 1px solid #fff; border-right-color: #404040; border-bottom-color: #404040; box-shadow: inset -1px -1px #808080; white-space: nowrap; }
.start { width: 54px; font-weight: bold; font-size: 12px; }
.handle { width: 5px; height: 20px; border-left: 1px solid #808080; border-right: 2px solid #fff; box-shadow: 1px 0 #808080; }
.launch { width: 191px; display: flex; gap: 7px; padding-left: 1px; }
.tasks { flex: 1; display: grid; grid-template-columns: repeat(3, 1fr); gap: 4px; }
.task.active { font-weight: bold; font-size: 12px; background: repeating-conic-gradient(#c0c0ff 0 25%, #fff 0 50%) 0 0 / 2px 2px; border-color: #404040 #fff #fff #404040; box-shadow: inset 1px 1px #808080; }
.tray { width: 121px; height: 22px; margin-left: 4px; display: flex; align-items: center; gap: 2px; padding: 0 7px 0 3px; border: 1px solid #808080; border-right-color: #fff; border-bottom-color: #fff; }
.tray time { margin-left: auto; }

.notes { position: absolute; left: 0; top: 0; pointer-events: none; }
.ink { fill: none; stroke-width: 5px; stroke-linecap: round; stroke-linejoin: round; shape-rendering: crispEdges; }
.ink.green { stroke: #008000; }
.ink.blue { stroke: #0000ff; }
.words { font-family: "Liberation Serif", "Times New Roman", serif; font-weight: bold; font-size: 19px; }
.words.green { fill: #008000; }
.words.blue { fill: #0000ff; font-size: 24px; }
</style>
